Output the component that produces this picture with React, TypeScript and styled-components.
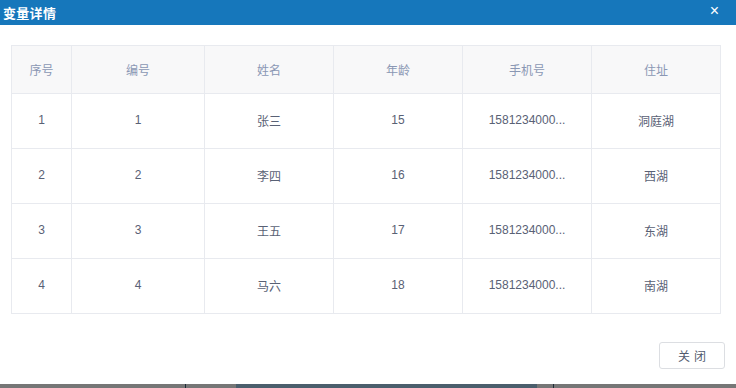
import styled, { createGlobalStyle } from "styled-components";

const GlobalStyle = createGlobalStyle`
  html, body {
    margin: 0;
    padding: 0;
    background: #ffffff;
    font-family: "Liberation Sans", "Noto Sans CJK SC", sans-serif;
  }
`;

const Page = styled.div`
  width: 736px;
  height: 388px;
  display: flex;
  flex-direction: column;
  overflow: hidden;
`;

const Dialog = styled.div`
  height: 384px;
  display: flex;
  flex-direction: column;
  background: #ffffff;
`;

const Header = styled.div`
  height: 25px;
  background: #1677bb;
  display: flex;
  align-items: center;
  justify-content: space-between;
  padding: 0 17px 0 3px;
  color: #ffffff;
`;

const Title = styled.span`
  font-size: 13px;
  font-weight: bold;
  letter-spacing: 0.3px;
`;

const Close = styled.span`
  font-size: 16px;
  line-height: 1;
  margin-top: -3px;
`;

const Body = styled.div`
  padding: 20px 16px 0 11px;
  flex: 1;
`;

const Table = styled.table`
  border-collapse: collapse;
  table-layout: fixed;
  width: 709px;
  font-size: 12px;
  text-align: center;
`;

const Th = styled.th`
  height: 47px;
  padding: 0;
  background: #f8f8f9;
  color: #8a97b4;
  font-weight: normal;
  border: 1px solid #e8eaef;
`;

const Td = styled.td`
  height: 52px;
  padding: 0 0 2px;
  color: #596175;
  border: 1px solid #e8eaef;
`;

const Footer = styled.div`
  display: flex;
  justify-content: flex-end;
  padding: 0 11px 15px 0;
`;

const Button = styled.button`
  width: 66px;
  height: 27px;
  background: #ffffff;
  border: 1px solid #dcdee2;
  border-radius: 3px;
  color: #515a6e;
  font-size: 12px;
  font-family: "Liberation Sans", "Noto Sans CJK SC", sans-serif;
  letter-spacing: 4px;
  padding: 0 0 0 4px;
`;

const Taskbar = styled.div`
  height: 4px;
  display: flex;
`;

const Segment = styled.div<{ $w: number; $bg: string; $edge?: boolean }>`
  width: ${(p) => p.$w}px;
  background: ${(p) => p.$bg};
  border-right: ${(p) => (p.$edge ? "1px solid #1d2a36" : "none")};
`;

const columns = [
  { key: "idx", label: "序号", width: 60 },
  { key: "no", label: "编号", width: 133 },
  { key: "name", label: "姓名", width: 129 },
  { key: "age", label: "年龄", width: 129 },
  { key: "phone", label: "手机号", width: 129 },
  { key: "addr", label: "住址", width: 129 },
];

const rows = [
  { idx: "1", no: "1", name: "张三", age: "15", phone: "1581234000...", addr: "洞庭湖" },
  { idx: "2", no: "2", name: "李四", age: "16", phone: "1581234000...", addr: "西湖" },
  { idx: "3", no: "3", name: "王五", age: "17", phone: "1581234000...", addr: "东湖" },
  { idx: "4", no: "4", name: "马六", age: "18", phone: "1581234000...", addr: "南湖" },
];

export default function App() {
  return (
    <Page>
      <GlobalStyle />
      <Dialog>
        <Header>
          <Title>变量详情</Title>
          <Close>×</Close>
        </Header>
        <Body>
          <Table>
            <colgroup>
              {columns.map((c) => (
                <col key={c.key} style={{ width: c.width }} />
              ))}
            </colgroup>
            <thead>
              <tr>
                {columns.map((c) => (
                  <Th key={c.key}>{c.label}</Th>
                ))}
              </tr>
            </thead>
            <tbody>
              {rows.map((r) => (
                <tr key={r.idx}>
                  {columns.map((c) => (
                    <Td key={c.key}>{r[c.key as keyof typeof r]}</Td>
                  ))}
                </tr>
              ))}
            </tbody>
          </Table>
        </Body>
        <Footer>
          <Button>关闭</Button>
        </Footer>
      </Dialog>
      <Taskbar>
        <Segment $w={185} $bg="#767676" $edge />
        <Segment $w={50} $bg="#767676" />
        <Segment $w={302} $bg="#4b5e6c" />
        <Segment $w={16} $bg="#767676" $edge />
        <Segment $w={182} $bg="#767676" />
      </Taskbar>
    </Page>
  );
}
